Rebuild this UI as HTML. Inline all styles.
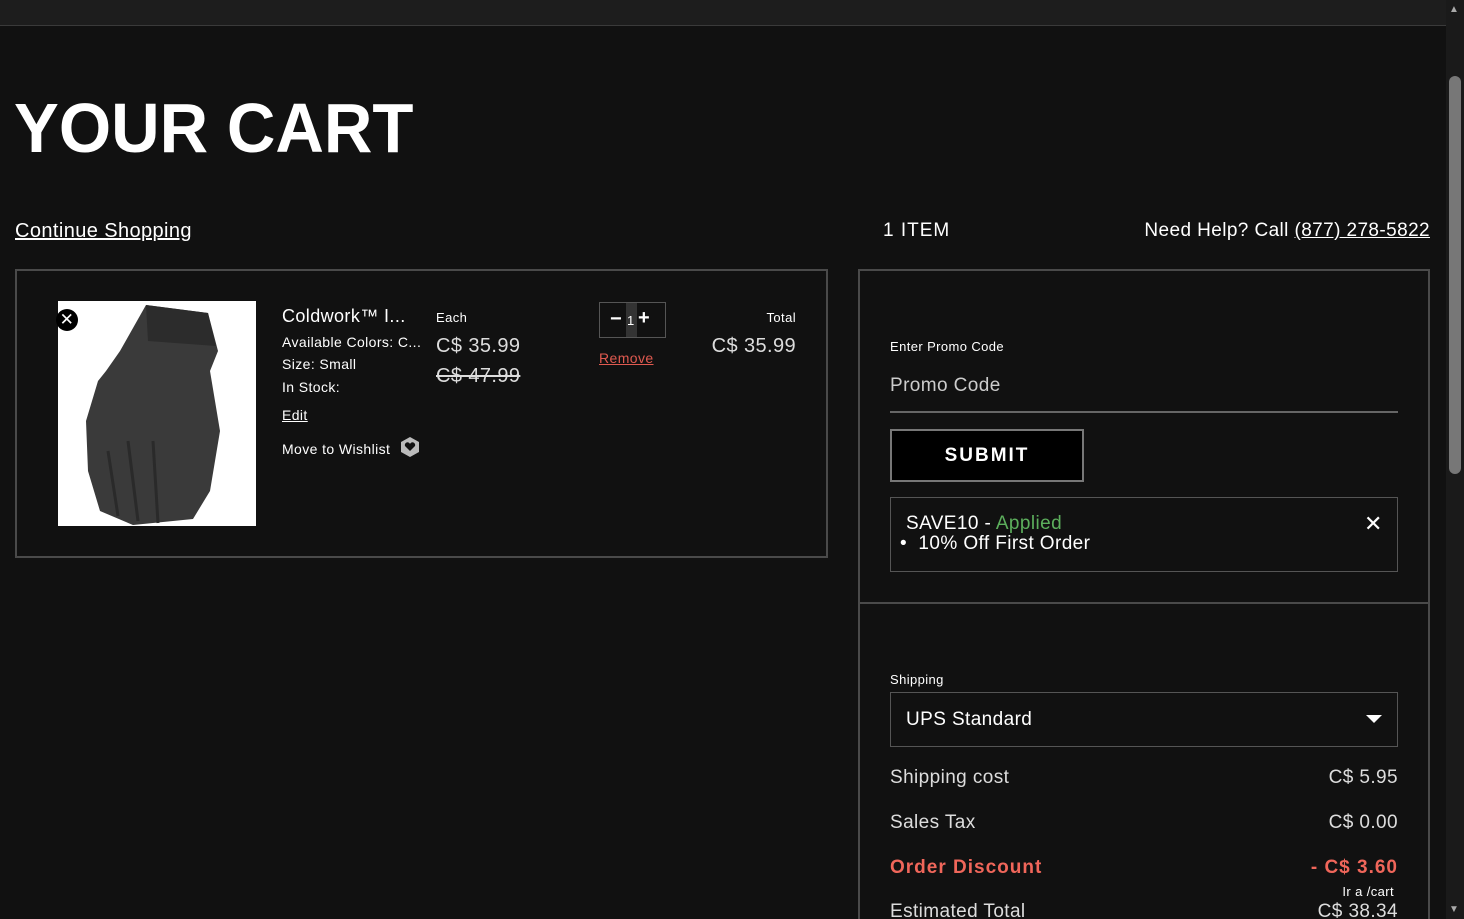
<!DOCTYPE html>
<html><head><style>
*{margin:0;padding:0;box-sizing:border-box}
html,body{width:1464px;height:919px;overflow:hidden}
body{background:#111;color:#fff;font-family:"Liberation Sans",sans-serif;position:relative;letter-spacing:0.4px}
.a{position:absolute;white-space:nowrap}
.r{position:absolute;white-space:nowrap;text-align:right}
.top{left:0;top:0;width:1446px;height:26px;background:#1d1d1d;border-bottom:1px solid #3a3a3a}
.sb{left:1446px;top:0;width:18px;height:919px;background:#1a1a1a}
.thumb{left:1449px;top:76px;width:12px;height:398px;background:#777;border-radius:6px}
.box{border:2px solid #4a4a4a}
.u{text-decoration:underline}
</style></head><body>
<div class="a top"></div>
<div class="a sb"></div><div class="a thumb"></div>
<div class="a" style="left:1449px;top:4px;font-size:10px;color:#aaa">▲</div>
<div class="a" style="left:1449px;top:904px;font-size:10px;color:#aaa">▼</div>
<div class="a" style="left:14px;top:88px;font-size:70px;font-weight:900;letter-spacing:0;transform:scaleX(0.96);transform-origin:left">YOUR CART</div>
<div class="a u" style="left:15px;top:220px;font-size:20px">Continue Shopping</div>
<div class="a" style="left:883px;top:220px;font-size:19px;letter-spacing:1px">1 ITEM</div>
<div class="r" style="right:34px;top:220px;font-size:19px">Need Help? Call <span class="u">(877) 278-5822</span></div>
<div class="a box" style="left:15px;top:269px;width:813px;height:289px"></div>
<div class="a" style="left:58px;top:301px;width:198px;height:225px;background:#fff"></div>
<svg class="a" style="left:58px;top:301px" width="198" height="225"><path d="M88 4 L150 12 L160 50 L152 70 L162 130 L152 190 L135 218 L75 224 L42 210 L30 170 L28 120 L40 80 L48 70 L62 50 Z" fill="#3a3a3a"/><path d="M88 4 L150 12 L158 45 L90 40 Z" fill="#2c2c2c"/><path d="M50 150 L60 215 M70 140 L80 220 M95 140 L100 222" stroke="#2a2a2a" stroke-width="3"/></svg>
<div class="a" style="left:56px;top:309px;width:22px;height:22px;border-radius:50%;background:#000;color:#fff;font-size:17px;text-align:center;line-height:22px">✕</div>
<div class="a" style="left:282px;top:306px;font-size:18px">Coldwork™ I...</div>
<div class="a" style="left:282px;top:334px;font-size:14px">Available Colors: C...</div>
<div class="a" style="left:282px;top:356px;font-size:14px">Size: Small</div>
<div class="a" style="left:282px;top:379px;font-size:14px">In Stock:</div>
<div class="a u" style="left:282px;top:407px;font-size:14px">Edit</div>
<div class="a" style="left:282px;top:441px;font-size:14px">Move to Wishlist</div>
<svg class="a" style="left:400px;top:436px" width="20" height="22"><path d="M10 1 L19 6 L19 16 L10 21 L1 16 L1 6 Z" fill="#bbb"/><path d="M10 15 L5 10 A2.5 2.5 0 0 1 10 8 A2.5 2.5 0 0 1 15 10 Z" fill="#111"/></svg>
<div class="a" style="left:436px;top:310px;font-size:13px">Each</div>
<div class="a" style="left:436px;top:335px;font-size:20px;color:#ddd">C$ 35.99</div>
<div class="a" style="left:436px;top:365px;font-size:20px;color:#ddd;text-decoration:line-through">C$ 47.99</div>
<div class="a" style="left:599px;top:302px;width:67px;height:36px;border:1px solid #555"></div>
<div class="a" style="left:626px;top:303px;width:11px;height:34px;background:#333"></div>
<div class="a" style="left:610px;top:308px;font-size:20px;font-weight:bold">−</div>
<div class="a" style="left:627px;top:313px;font-size:13px">1</div>
<div class="a" style="left:638px;top:307px;font-size:20px;font-weight:bold">+</div>
<div class="a u" style="left:599px;top:350px;font-size:14px;color:#e05a50">Remove</div>
<div class="r" style="right:668px;top:310px;font-size:13px">Total</div>
<div class="r" style="right:668px;top:335px;font-size:20px;color:#ddd">C$ 35.99</div>
<div class="a box" style="left:858px;top:269px;width:572px;height:680px"></div>
<div class="a" style="left:860px;top:602px;width:568px;height:2px;background:#4a4a4a"></div>
<div class="a" style="left:890px;top:339px;font-size:13px">Enter Promo Code</div>
<div class="a" style="left:890px;top:375px;font-size:19px;color:#ccc">Promo Code</div>
<div class="a" style="left:890px;top:411px;width:508px;height:2px;background:#666"></div>
<div class="a" style="left:890px;top:429px;width:194px;height:53px;border:2px solid #777;background:#000;text-align:center;line-height:49px;font-size:19px;font-weight:bold;letter-spacing:2px">SUBMIT</div>
<div class="a" style="left:890px;top:497px;width:508px;height:75px;border:1px solid #555"></div>
<div class="a" style="left:906px;top:513px;font-size:19px">SAVE10 - <span style="color:#5cae5c">Applied</span></div>
<div class="a" style="left:900px;top:533px;font-size:19px">•&nbsp; 10% Off First Order</div>
<div class="a" style="left:1364px;top:511px;font-size:22px">✕</div>
<div class="a" style="left:890px;top:672px;font-size:13px">Shipping</div>
<div class="a" style="left:890px;top:692px;width:508px;height:55px;border:1px solid #555"></div>
<div class="a" style="left:906px;top:709px;font-size:19px">UPS Standard</div>
<svg class="a" style="left:1366px;top:715px" width="16" height="10"><path d="M0 0 L16 0 L8 8 Z" fill="#fff"/></svg>
<div class="a" style="left:890px;top:767px;font-size:19px;color:#ddd">Shipping cost</div>
<div class="r" style="right:66px;top:767px;font-size:19px;color:#ddd">C$ 5.95</div>
<div class="a" style="left:890px;top:812px;font-size:19px;color:#ddd">Sales Tax</div>
<div class="r" style="right:66px;top:812px;font-size:19px;color:#ddd">C$ 0.00</div>
<div class="a" style="left:890px;top:857px;font-size:19px;color:#f0665a;font-weight:bold;letter-spacing:1px">Order Discount</div>
<div class="r" style="right:66px;top:857px;font-size:19px;color:#f0665a;font-weight:bold;letter-spacing:1px">- C$ 3.60</div>
<div class="a" style="left:890px;top:901px;font-size:19px;color:#ddd">Estimated Total</div>
<div class="r" style="right:66px;top:901px;font-size:19px;color:#ddd">C$ 38.34</div>
<div class="r" style="right:70px;top:884px;font-size:13px">Ir a /cart</div>
</body></html>
